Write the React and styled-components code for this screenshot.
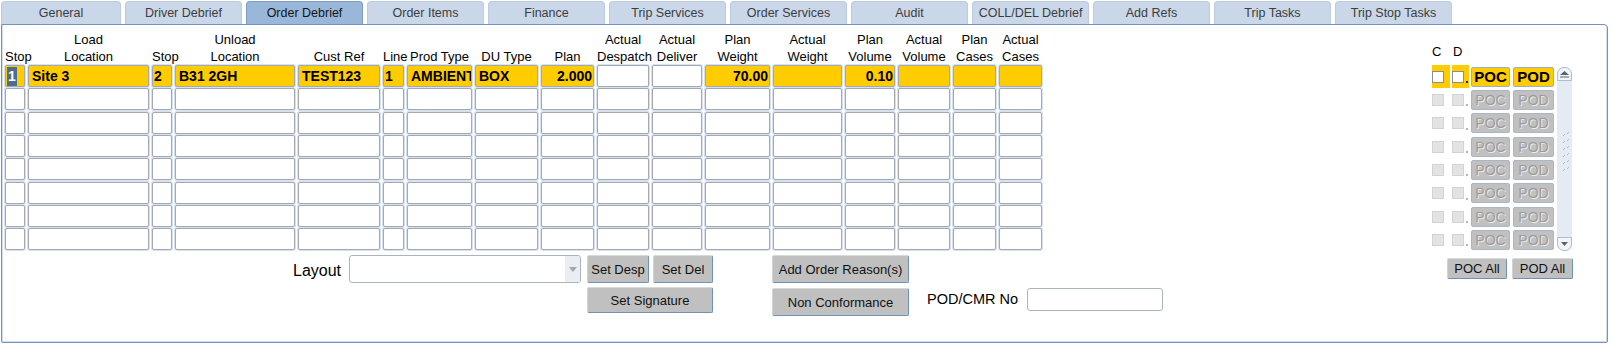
import React from "react";
import styled, { createGlobalStyle } from "styled-components";

const GlobalStyle = createGlobalStyle`
  body {
    margin: 0;
    background: #ffffff;
    font-family: "Liberation Sans", Arial, sans-serif;
    color: #000;
  }
`;

const tabs = [
  "General",
  "Driver Debrief",
  "Order Debrief",
  "Order Items",
  "Finance",
  "Trip Services",
  "Order Services",
  "Audit",
  "COLL/DEL Debrief",
  "Add Refs",
  "Trip Tasks",
  "Trip Stop Tasks",
];

const columns = [
  { w: 20, head: ["", "Stop"] },
  { w: 121, head: ["Load", "Location"] },
  { w: 20, head: ["", "Stop"] },
  { w: 120, head: ["Unload", "Location"] },
  { w: 82, head: ["", "Cust Ref"] },
  { w: 21, head: ["", "Line"] },
  { w: 65, head: ["", "Prod Type"] },
  { w: 63, head: ["", "DU Type"] },
  { w: 53, head: ["", "Plan"] },
  { w: 52, head: ["Actual", "Despatch"] },
  { w: 50, head: ["Actual", "Deliver"] },
  { w: 65, head: ["Plan", "Weight"] },
  { w: 69, head: ["Actual", "Weight"] },
  { w: 50, head: ["Plan", "Volume"] },
  { w: 52, head: ["Actual", "Volume"] },
  { w: 43, head: ["Plan", "Cases"] },
  { w: 43, head: ["Actual", "Cases"] },
];

const template = columns.map((c) => `${c.w}px`).join(" ");

const firstRow = [
  { v: "1", hl: true, sel: true },
  { v: "Site 3", hl: true },
  { v: "2", hl: true },
  { v: "B31 2GH", hl: true },
  { v: "TEST123", hl: true },
  { v: "1", hl: true },
  { v: "AMBIENT", hl: true },
  { v: "BOX", hl: true },
  { v: "2.000", hl: true, num: true },
  { v: "" },
  { v: "" },
  { v: "70.00", hl: true, num: true },
  { v: "", hl: true },
  { v: "0.10", hl: true, num: true },
  { v: "", hl: true },
  { v: "", hl: true },
  { v: "", hl: true },
];

const Page = styled.div`
  width: 1607px;
  padding: 1px 0 0 1px;
`;

const TabBar = styled.div`
  display: flex;
  gap: 4px;
  height: 23px;
`;

const Tab = styled.div`
  width: ${(p) => (p.$first ? 120 : 117)}px;
  box-sizing: border-box;
  height: 23px;
  padding-top: 3px;
  border: 1px solid ${(p) => (p.$active ? "#7d9dc4" : "#bccbde")};
  border-bottom: none;
  border-radius: 4px 4px 0 0;
  background: ${(p) => (p.$active ? "#99b7d9" : "#c9d7e9")};
  color: ${(p) => (p.$active ? "#151515" : "#3d3d3d")};
  font-size: 12.5px;
  line-height: 17px;
  text-align: center;
  white-space: nowrap;
`;

const Panel = styled.div`
  box-sizing: border-box;
  height: 319px;
  border: 1px solid #7393bb;
  border-radius: 0 4px 2px 2px;
  box-shadow: inset -1px -1px 0 #d2deec, inset 1px 0 0 #d2deec;
  padding: 6px 34px 0 3px;
  display: grid;
  grid-template-columns: 1fr 141px;
  align-items: start;
`;

const LeftColumn = styled.div`
  display: flex;
  flex-direction: column;
`;

const HeaderGrid = styled.div`
  display: grid;
  grid-template-columns: ${template};
  column-gap: 3px;
  height: 34px;
`;

const HeadCell = styled.div`
  font-size: 13px;
  line-height: 17px;
  text-align: center;
  white-space: nowrap;
`;

const BodyGrid = styled.div`
  display: grid;
  grid-template-columns: ${template};
  grid-auto-rows: 22px;
  column-gap: 3px;
  row-gap: 1.33px;
`;

const Cell = styled.div`
  box-sizing: border-box;
  height: 22px;
  border: 1px solid #a2a9b2;
  border-radius: 2px;
  box-shadow: 0 0 0 1px #d8e2ee;
  background: ${(p) => (p.$hl ? "#ffcc00" : "#ffffff")};
  padding: 0 ${(p) => (p.$num ? "1px" : p.$narrow ? "1px" : "3px")};
  text-align: ${(p) => (p.$num ? "right" : "left")};
  font-weight: bold;
  font-size: 14px;
  line-height: 20px;
  white-space: nowrap;
  overflow: hidden;
`;

const Selected = styled.span`
  display: inline-block;
  background: #4c6b96;
  color: #ffffff;
  padding: 0 1px;
  line-height: 19px;
`;

const Controls = styled.div`
  display: flex;
  align-items: flex-start;
  margin: 5px 0 0 288px;
`;

const FieldLabel = styled.div`
  font-size: ${(p) => p.$size}px;
  line-height: ${(p) => p.$h}px;
  width: ${(p) => p.$w}px;
  padding-top: ${(p) => p.$pt || 0}px;
  white-space: nowrap;
  color: #000;
`;

const SelectBox = styled.div`
  box-sizing: border-box;
  width: 232px;
  height: 28px;
  margin: 0 6px 0 7px;
  border: 1px solid #aab4c1;
  border-radius: 3px;
  background: #ffffff;
  display: flex;
  justify-content: flex-end;
`;

const SelectArrow = styled.div`
  width: 15px;
  background: #e9eef5;
  border-radius: 0 2px 2px 0;
  display: flex;
  align-items: center;
  justify-content: center;
`;

const Stack = styled.div`
  display: flex;
  flex-direction: column;
  gap: ${(p) => p.$gap}px;
  margin-left: ${(p) => p.$ml || 0}px;
`;

const ButtonRow = styled.div`
  display: flex;
  gap: ${(p) => p.$gap}px;
`;

const Button = styled.button`
  box-sizing: border-box;
  width: ${(p) => p.$w}px;
  height: ${(p) => p.$h}px;
  padding: 0;
  background: #c0c0c0;
  border: 1px solid;
  border-color: #d9d9d9 #7090b6 #7090b6 #d2d2d2;
  border-radius: 2px;
  font-family: "Liberation Sans", Arial, sans-serif;
  font-size: 13px;
  color: #111111;
  white-space: nowrap;
`;

const PodField = styled.div`
  display: flex;
  align-items: center;
  margin: 33px 0 0 18px;
`;

const TextInput = styled.div`
  box-sizing: border-box;
  width: 136px;
  height: 23px;
  border: 1px solid #aab4c1;
  border-radius: 3px;
  background: #ffffff;
`;

const RightColumn = styled.div`
  display: flex;
  flex-direction: column;
`;

const FlagHeader = styled.div`
  display: flex;
  height: 34px;
  box-sizing: border-box;
  padding-top: 12px;
  font-size: 13px;
  line-height: 17px;
`;

const FlagLetter = styled.span`
  width: ${(p) => p.$w}px;
`;

const FlagArea = styled.div`
  display: flex;
  align-items: flex-start;
`;

const FlagRows = styled.div`
  display: flex;
  flex-direction: column;
`;

const FlagRow = styled.div`
  display: flex;
  align-items: center;
  height: 23.33px;
`;

const CheckSlot = styled.div`
  width: ${(p) => p.$w}px;
  height: 23px;
  margin-right: 2px;
  background: ${(p) => (p.$hl ? "#ffcc00" : "transparent")};
  display: flex;
  align-items: center;
`;

const Check = styled.span`
  box-sizing: border-box;
  width: 12px;
  height: 12px;
  border: 1px solid ${(p) => (p.$on ? "#8c8c8c" : "#d3d3d3")};
  background: ${(p) => (p.$on ? "#ffffff" : "#e3e3e3")};
`;

const Dot = styled.span`
  width: 2px;
  height: 2px;
  margin: 0 0 5px 2px;
  align-self: flex-end;
  background: ${(p) => (p.$on ? "#222222" : "#b5b5b5")};
`;

const ProofButton = styled.div`
  box-sizing: border-box;
  width: ${(p) => p.$w}px;
  height: 20px;
  margin-right: 3px;
  border: 1px solid ${(p) => (p.$on ? "#9caec4" : "#aab6c4")};
  border-radius: 2px;
  background: ${(p) => (p.$on ? "#ffcc00" : "#c0c0c0")};
  color: ${(p) => (p.$on ? "#000000" : "#9c9c9c")};
  text-shadow: ${(p) => (p.$on ? "none" : "1px 1px 0 #e8e8e8")};
  font-weight: ${(p) => (p.$on ? "bold" : "normal")};
  font-size: ${(p) => (p.$on ? 15 : 14)}px;
  line-height: 18px;
  text-align: center;
`;

const ScrollTrack = styled.div`
  box-sizing: border-box;
  width: 15px;
  height: 184px;
  margin-top: 2px;
  border-radius: 7px;
  background: #e5ebf3;
  display: flex;
  flex-direction: column;
  align-items: center;
`;

const ScrollButton = styled.div`
  box-sizing: border-box;
  width: 15px;
  height: 14px;
  margin-top: ${(p) => (p.$down ? "auto" : "0")};
  border: 1px solid #aebdd0;
  border-radius: ${(p) => (p.$down ? "0 0 7px 7px" : "7px 7px 0 0")};
  background: #f1f4f8;
  display: flex;
  align-items: center;
  justify-content: center;
`;

const Grip = styled.div`
  margin: 51px 0 0 4px;
`;

const AllRow = styled.div`
  display: flex;
  justify-content: flex-end;
  gap: 5px;
  margin-top: 6px;
`;

const AllButton = styled(Button)`
  height: 21px;
`;

const rowsBelow = Array.from({ length: 7 });

const App = () => {
  return (
    <Page>
      <GlobalStyle />
      <TabBar>
        {tabs.map((t, i) => (
          <Tab key={t} $first={i === 0} $active={t === "Order Debrief"}>
            {t}
          </Tab>
        ))}
      </TabBar>
      <Panel>
        <LeftColumn>
          <HeaderGrid>
            {columns.map((c, i) => (
              <div key={i}>
                <HeadCell>{c.head[0] || "\u00a0"}</HeadCell>
                <HeadCell>{c.head[1]}</HeadCell>
              </div>
            ))}
          </HeaderGrid>
          <BodyGrid>
            {firstRow.map((c, i) => (
              <Cell key={i} $hl={c.hl} $num={c.num} $narrow={columns[i].w < 25}>
                {c.sel ? <Selected>{c.v}</Selected> : c.v}
              </Cell>
            ))}
            {rowsBelow.map((_, r) =>
              columns.map((c, i) => <Cell key={`${r}-${i}`} />)
            )}
          </BodyGrid>
          <Controls>
            <FieldLabel $size={16} $h={28} $w={49} $pt={2}>
              Layout
            </FieldLabel>
            <SelectBox>
              <SelectArrow>
                <svg width="8" height="5" viewBox="0 0 8 5">
                  <path d="M0 0 L8 0 L4 5 Z" fill="#a7a7a7" />
                </svg>
              </SelectArrow>
            </SelectBox>
            <Stack $gap={4}>
              <ButtonRow $gap={4}>
                <Button $w={62} $h={28}>Set Desp</Button>
                <Button $w={60} $h={28}>Set Del</Button>
              </ButtonRow>
              <Button $w={126} $h={26}>Set Signature</Button>
            </Stack>
            <Stack $gap={5} $ml={59}>
              <Button $w={137} $h={28}>Add Order Reason(s)</Button>
              <Button $w={137} $h={28}>Non Conformance</Button>
            </Stack>
            <PodField>
              <FieldLabel $size={14.5} $h={23} $w={100}>
                POD/CMR No
              </FieldLabel>
              <TextInput />
            </PodField>
          </Controls>
        </LeftColumn>
        <RightColumn>
          <FlagHeader>
            <FlagLetter $w={21}>C</FlagLetter>
            <FlagLetter $w={20}>D</FlagLetter>
          </FlagHeader>
          <FlagArea>
            <FlagRows>
              {Array.from({ length: 8 }).map((_, r) => {
                const on = r === 0;
                return (
                  <FlagRow key={r}>
                    <CheckSlot $w={18} $hl={on}>
                      <Check $on={on} />
                    </CheckSlot>
                    <CheckSlot $w={17} $hl={on}>
                      <Check $on={on} />
                      <Dot $on={on} />
                    </CheckSlot>
                    <ProofButton $w={39} $on={on}>POC</ProofButton>
                    <ProofButton $w={41} $on={on}>POD</ProofButton>
                  </FlagRow>
                );
              })}
            </FlagRows>
            <ScrollTrack>
              <ScrollButton>
                <svg width="9" height="7" viewBox="0 0 9 7">
                  <path d="M4.5 0 L9 4 L0 4 Z" fill="#5a6270" />
                  <rect x="0" y="5.5" width="9" height="1" fill="#5a6270" />
                </svg>
              </ScrollButton>
              <Grip>
                <svg width="9" height="44" viewBox="0 0 9 44">
                  {[0, 7, 14, 21, 28, 35].map((y) => (
                    <g key={y} stroke="#b4bcc8" strokeWidth="1">
                      <line x1="1" y1={y + 4} x2="3" y2={y + 2} />
                      <line x1="5" y1={y + 2} x2="7" y2={y} />
                    </g>
                  ))}
                </svg>
              </Grip>
              <ScrollButton $down>
                <svg width="7" height="4" viewBox="0 0 7 4">
                  <path d="M0 0 L7 0 L3.5 4 Z" fill="#5a6270" />
                </svg>
              </ScrollButton>
            </ScrollTrack>
          </FlagArea>
          <AllRow>
            <AllButton $w={60}>POC All</AllButton>
            <AllButton $w={61}>POD All</AllButton>
          </AllRow>
        </RightColumn>
      </Panel>
    </Page>
  );
};

export default App;
